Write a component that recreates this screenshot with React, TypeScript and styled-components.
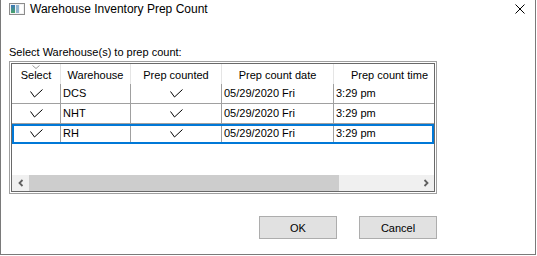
import React from "react";
import styled, { createGlobalStyle } from "styled-components";

const Global = createGlobalStyle`
  html, body { margin: 0; padding: 0; background: #ffffff; }
  body { font-family: "Liberation Sans", Arial, sans-serif; color: #000; }
`;

const Window = styled.div`
  width: 536px;
  height: 255px;
  box-sizing: border-box;
  border-left: 1px solid #7a7a7a;
  border-right: 1px solid #7a7a7a;
  border-bottom: 1px solid #7a7a7a;
  background: #ffffff;
  display: flex;
  flex-direction: column;
`;

const TitleBar = styled.div`
  height: 18px;
  display: flex;
  align-items: center;
  padding: 0 10px 0 8px;
`;

const Title = styled.div`
  flex: 1;
  margin-left: 5px;
  font-size: 12px;
  line-height: 14px;
  color: #000;
  white-space: nowrap;
`;

const Body = styled.div`
  padding: 28px 0 0 8px;
  display: flex;
  flex-direction: column;
  width: 428px;
`;

const Label = styled.div`
  font-size: 11px;
  line-height: 13px;
  height: 13px;
  margin-bottom: 2px;
  white-space: nowrap;
`;

const GridFrame = styled.div`
  width: 428px;
  height: 133px;
  box-sizing: border-box;
  border: 1px solid #a0a0a0;
  padding: 1px;
`;

const GridInner = styled.div`
  height: 100%;
  box-sizing: border-box;
  border: 1px solid #696969;
  display: flex;
  flex-direction: column;
  overflow: hidden;
`;

const Row = styled.div<{ $selected?: boolean }>`
  display: flex;
  width: 422px;
  height: 20px;
  flex: none;
  overflow: hidden;
  outline: ${(p) => (p.$selected ? "2px solid #0078d7" : "none")};
  outline-offset: -2px;
`;

const HeaderCell = styled.div<{ $w: number }>`
  position: relative;
  flex: none;
  width: ${(p) => p.$w}px;
  height: 20px;
  box-sizing: border-box;
  border-right: 1px solid #e5e5e5;
  display: flex;
  align-items: center;
  justify-content: center;
  padding-top: 2px;
  font-size: 11px;
  line-height: 13px;
  white-space: nowrap;
`;

const Cell = styled.div<{ $w: number; $center?: boolean }>`
  flex: none;
  width: ${(p) => p.$w}px;
  height: 20px;
  box-sizing: border-box;
  border-right: 1px solid #a0a0a0;
  border-bottom: 1px solid #a0a0a0;
  display: flex;
  align-items: center;
  justify-content: ${(p) => (p.$center ? "center" : "flex-start")};
  padding-left: ${(p) => (p.$center ? 0 : 2)}px;
  font-size: 11px;
  line-height: 13px;
  white-space: nowrap;
`;

const SortGlyph = styled.svg`
  position: absolute;
  top: 1px;
  left: 50%;
  transform: translateX(-50%);
`;

const Spacer = styled.div`
  flex: 1;
`;

const ScrollBar = styled.div`
  flex: none;
  height: 16px;
  display: flex;
  background: #f0f0f0;
`;

const ArrowButton = styled.div`
  flex: none;
  width: 17px;
  height: 16px;
  display: flex;
  align-items: center;
  justify-content: center;
`;

const Thumb = styled.div`
  flex: none;
  width: 310px;
  height: 16px;
  background: #cdcdcd;
`;

const Track = styled.div`
  flex: 1;
`;

const ButtonRow = styled.div`
  margin-top: 22px;
  display: flex;
  justify-content: flex-end;
  gap: 22px;
`;

const Button = styled.button`
  width: 78px;
  height: 23px;
  box-sizing: border-box;
  border: 1px solid #adadad;
  background: #e1e1e1;
  font-family: "Liberation Sans", Arial, sans-serif;
  font-size: 11px;
  color: #000;
  padding: 0;
  margin: 0;
`;

const Check = () => (
  <svg width="13" height="9" viewBox="0 0 13 9">
    <polyline points="0.5,2.5 4.5,8 12.5,0.5" fill="none" stroke="#000" strokeWidth="1" />
  </svg>
);

const AppIcon = () => (
  <svg width="16" height="12" viewBox="0 0 16 12">
    <defs>
      <linearGradient id="ig" x1="0" y1="0" x2="0" y2="1">
        <stop offset="0" stopColor="#3d77b8" />
        <stop offset="1" stopColor="#47a36a" />
      </linearGradient>
    </defs>
    <rect x="0.5" y="0.5" width="15" height="11" fill="#f2f2f2" stroke="#8c8c8c" />
    <rect x="2" y="2" width="4" height="8" fill="url(#ig)" />
    <rect x="7" y="2" width="3" height="8" fill="#8fb4d0" />
    <rect x="11" y="2" width="3" height="8" fill="#ffffff" />
  </svg>
);

const cols = [
  { title: "Select", w: 49 },
  { title: "Warehouse", w: 70 },
  { title: "Prep counted", w: 91 },
  { title: "Prep count date", w: 112 },
  { title: "Prep count time", w: 112 },
];

const rows = [
  { wh: "DCS", date: "05/29/2020 Fri", time: "3:29 pm" },
  { wh: "NHT", date: "05/29/2020 Fri", time: "3:29 pm" },
  { wh: "RH", date: "05/29/2020 Fri", time: "3:29 pm" },
];

export default function App() {
  return (
    <>
      <Global />
      <Window>
        <TitleBar>
          <AppIcon />
          <Title>Warehouse Inventory Prep Count</Title>
          <svg width="10" height="10" viewBox="0 0 10 10">
            <path d="M0.5 0.5 L9.5 9.5 M9.5 0.5 L0.5 9.5" stroke="#000" strokeWidth="1" />
          </svg>
        </TitleBar>
        <Body>
          <Label>Select Warehouse(s) to prep count:</Label>
          <GridFrame>
            <GridInner>
              <Row>
                {cols.map((c, i) => (
                  <HeaderCell key={c.title} $w={c.w}>
                    {i === 0 && (
                      <SortGlyph width="8" height="4" viewBox="0 0 8 4">
                        <polyline points="0.5,0.5 4,3.5 7.5,0.5" fill="none" stroke="#9a9a9a" strokeWidth="1" />
                      </SortGlyph>
                    )}
                    {c.title}
                  </HeaderCell>
                ))}
              </Row>
              {rows.map((r, i) => (
                <Row key={r.wh} $selected={i === 2}>
                  <Cell $w={cols[0].w} $center>
                    <Check />
                  </Cell>
                  <Cell $w={cols[1].w}>{r.wh}</Cell>
                  <Cell $w={cols[2].w} $center>
                    <Check />
                  </Cell>
                  <Cell $w={cols[3].w}>{r.date}</Cell>
                  <Cell $w={cols[4].w}>{r.time}</Cell>
                </Row>
              ))}
              <Spacer />
              <ScrollBar>
                <ArrowButton>
                  <svg width="6" height="8" viewBox="0 0 6 8">
                    <polyline points="4.5,1 1.5,4 4.5,7" fill="none" stroke="#606060" strokeWidth="1.8" />
                  </svg>
                </ArrowButton>
                <Thumb />
                <Track />
                <ArrowButton>
                  <svg width="6" height="8" viewBox="0 0 6 8">
                    <polyline points="1.5,1 4.5,4 1.5,7" fill="none" stroke="#606060" strokeWidth="1.8" />
                  </svg>
                </ArrowButton>
              </ScrollBar>
            </GridInner>
          </GridFrame>
          <ButtonRow>
            <Button>OK</Button>
            <Button>Cancel</Button>
          </ButtonRow>
        </Body>
      </Window>
    </>
  );
}
